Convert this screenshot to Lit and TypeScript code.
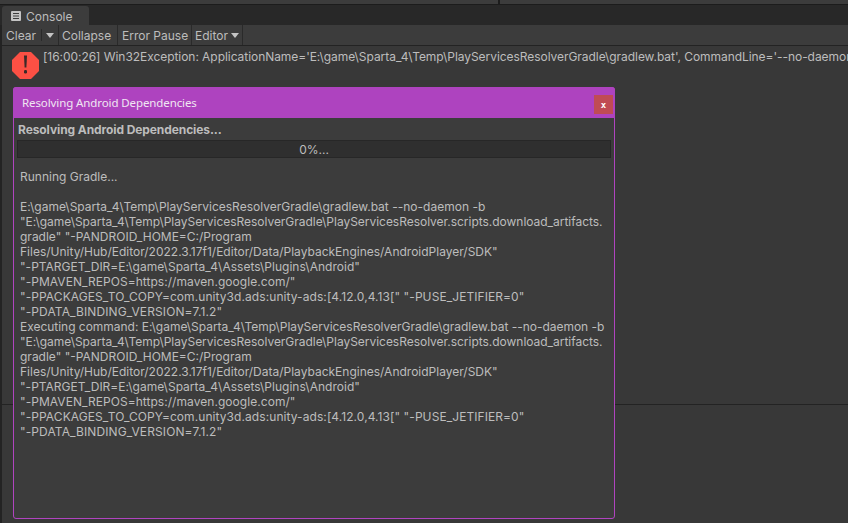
import { LitElement, html, css } from "lit";
import { customElement } from "lit/decorators.js";

const EXEC_LINES: [string, number][] = [
  ['"E:\\game\\Sparta_4\\Temp\\PlayServicesResolverGradle\\PlayServicesResolver.scripts.download_artifacts.', -0.025],
  ['gradle" "-PANDROID_HOME=C:/Program', 0],
  ['Files/Unity/Hub/Editor/2022.3.17f1/Editor/Data/PlaybackEngines/AndroidPlayer/SDK"', 0],
  ['"-PTARGET_DIR=E:\\game\\Sparta_4\\Assets\\Plugins\\Android"', 0.01],
  ['"-PMAVEN_REPOS=https://maven.google.com/"', 0.05],
  ['"-PPACKAGES_TO_COPY=com.unity3d.ads:unity-ads:[4.12.0,4.13[" "-PUSE_JETIFIER=0"', 0.075],
  ['"-PDATA_BINDING_VERSION=7.1.2"', 0.11],
];

const LOG: [string, number][] = [
  ["Running Gradle...", 0],
  ["\u00a0", 0],
  ["E:\\game\\Sparta_4\\Temp\\PlayServicesResolverGradle\\gradlew.bat --no-daemon -b", 0.01],
  ...EXEC_LINES,
  ["Executing command: E:\\game\\Sparta_4\\Temp\\PlayServicesResolverGradle\\gradlew.bat --no-daemon -b", -0.025],
  ...EXEC_LINES,
];

@customElement("app-root")
export class AppRoot extends LitElement {
  static styles = css`
    :host {
      display: block;
      width: 848px;
      height: 523px;
      overflow: hidden;
      font-family: Inter, "Liberation Sans", sans-serif;
      font-size: 12px;
      color: #bdbdbd;
      background: #232323;
    }
    .app { display: flex; flex-direction: column; width: 848px; height: 523px; position: relative; }
    .top { display: flex; height: 5px; flex: none; box-sizing: border-box; background: #3c3c3c; border-bottom: 1px solid #1c1c1c; }
    .top i { flex: 0 0 498px; background: #3c3c3c; border-right: 2px solid #1c1c1c; }
    .tabs { flex: none; height: 20px; display: flex; align-items: flex-end; background: #282828; padding-left: 2px; }
    .tab {
      width: 87px; height: 19px; box-sizing: border-box; background: #3c3c3c; border-radius: 3px 3px 0 0;
      display: flex; align-items: center; gap: 5px; padding: 1px 0 0 9px; font-size: 12px;
    }
    .tab svg { margin-top: -1px; }
    .main { flex: 1; display: flex; flex-direction: column; margin-left: 2px; background: #383838; }
    .toolbar { flex: none; height: 21px; box-sizing: border-box; display: flex; background: #3c3c3c; border-bottom: 1px solid #232323; }
    .tb { display: flex; align-items: center; box-sizing: border-box; padding: 1px 0 0 0; border-right: 1px solid #2a2a2a; white-space: nowrap; }
    .clear { width: 40px; padding-left: 4px; border-right: none; justify-content: space-between; }
    .clear b { width: 1px; height: 12px; background: #2a2a2a; margin-top: -1px; }
    .drop { width: 17px; padding-left: 4px; }
    .w-collapse { width: 59px; padding-left: 3px; }
    .w-pause { width: 74px; padding-left: 4px; }
    .w-editor { width: 51px; padding-left: 3px; gap: 3px; }
    .list { flex: none; height: 359px; box-sizing: border-box; border-bottom: 1px solid #232323; display: flex; align-items: flex-start; overflow: hidden; background: #383838; }
    .err { flex: none; margin: 6px 0 0 10px; }
    .msg { margin: 3px 0 0 4px; white-space: nowrap; line-height: 15px; font-size: 12px; letter-spacing: -0.05px; }
    .rest { flex: 1; }
    .dialog {
      position: absolute; left: 13px; top: 87px; width: 602px; height: 432px; box-sizing: border-box;
      background: #3c3c3c; border: 1px solid #b044c0; border-radius: 3px; display: flex; flex-direction: column;
    }
    .title {
      flex: none; height: 31px; margin: -1px -1px 0; background: #ae43bf; border-radius: 3px 3px 0 0;
      display: flex; align-items: center; justify-content: space-between; padding: 0 2px 0 9px;
      color: #f0e6f2; font: 11.5px "Noto Sans", sans-serif; letter-spacing: -0.1px;
    }
    .x {
      width: 19px; height: 19px; background: #c04b54; color: #fff; font: bold 9px "DejaVu Sans Mono", monospace;
      display: flex; align-items: center; justify-content: center; margin-top: 4px;
    }
    .body { flex: 1; display: flex; flex-direction: column; padding: 3px 3px 0 3px; }
    .heading { font-weight: 700; line-height: 18px; font-size: 12px; padding-left: 1px; letter-spacing: -0.09px; }
    .bar {
      flex: none; height: 18px; margin-top: 1px; box-sizing: border-box; background: #2f2f2f; border: 1px solid #272727;
      display: flex; align-items: center; justify-content: center; font-size: 12px;
    }
    .log { margin: 11px 0 0 3px; line-height: 15px; font-size: 12px; }
    .log div { white-space: pre; }
  `;

  render() {
    return html`<div class="app">
      <div class="top"><i></i><span></span></div>
      <div class="tabs">
        <div class="tab">
          <svg width="10" height="10" viewBox="0 0 10 10"><rect width="10" height="10" rx="1" fill="#c4c4c4"/><path d="M2 2.5h6M2 5h6M2 7.5h6" stroke="#3c3c3c" stroke-width="1"/></svg>
          Console
        </div>
      </div>
      <div class="main">
        <div class="toolbar">
          <div class="tb clear">Clear<b></b></div>
          <div class="tb drop"><svg width="8" height="5" viewBox="0 0 8 5"><path d="M0 0h8L4 5z" fill="#c4c4c4"/></svg></div>
          <div class="tb w-collapse">Collapse</div>
          <div class="tb w-pause">Error Pause</div>
          <div class="tb w-editor">Editor<svg width="8" height="5" viewBox="0 0 8 5"><path d="M0 0h8L4 5z" fill="#c4c4c4"/></svg></div>
        </div>
        <div class="list">
          <svg class="err" width="27" height="27" viewBox="0 0 27 27">
            <path d="M8 0h11l8 8v11l-8 8H8l-8-8V8z" fill="#fc5044"/>
            <path d="M12 3.5h3l-.6 12h-1.8z" fill="#3a2a28"/>
            <rect x="12" y="18" width="3" height="3.5" rx="1.2" fill="#3a2a28"/>
          </svg>
          <div class="msg">[16:00:26] Win32Exception: ApplicationName='E:\\game\\Sparta_4\\Temp\\PlayServicesResolverGradle\\gradlew.bat', CommandLine='--no-daemon -b</div>
        </div>
        <div class="rest"></div>
      </div>
      <div class="dialog">
        <div class="title"><span>Resolving Android Dependencies</span><span class="x">x</span></div>
        <div class="body">
          <div class="heading">Resolving Android Dependencies...</div>
          <div class="bar">0%...</div>
          <div class="log">${LOG.map(([t, s]) => html`<div style="letter-spacing:${s}px">${t}</div>`)}</div>
        </div>
      </div>
    </div>`;
  }
}
